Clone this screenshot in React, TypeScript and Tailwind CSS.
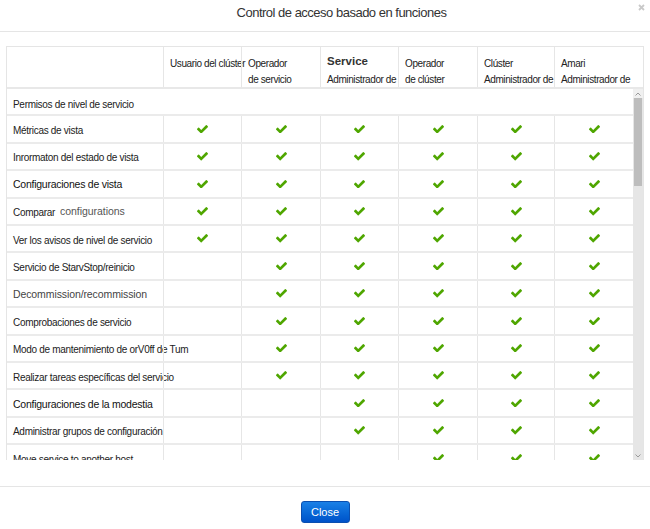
import React from 'react';

const SANS = "font-['Liberation_Sans',Arial,sans-serif]";

// widths of the six role columns (each includes its 1px left border)
const colW = ['w-[78px]', 'w-[79px]', 'w-[78px]', 'w-[79px]', 'w-[77px]', 'w-[79px]'];

type Row = { label: React.ReactNode; from: number; cls?: string };

const rows: Row[] = [
  { label: 'Métricas de vista', from: 0 },
  { label: 'Inrormaton del estado de vista', from: 0 },
  { label: 'Configuraciones de vista', from: 0, cls: 'text-[10.5px] tracking-[-0.25px] text-[#111]' },
  {
    label: (
      <>
        Comparar
        <span className="ml-[5px] text-[10.5px] tracking-[-0.05px] text-[#555] relative -top-[1px]">configurations</span>
      </>
    ),
    from: 0,
  },
  { label: 'Ver los avisos de nivel de servicio', from: 0 },
  { label: 'Servicio de StarvStop/reinicio', from: 1 },
  { label: 'Decommission/recommission', from: 1, cls: 'text-[10.5px] tracking-[-0.1px] text-[#444]' },
  { label: 'Comprobaciones de servicio', from: 1 },
  { label: 'Modo de mantenimiento de orV0ff de Tum', from: 1 },
  { label: 'Realizar tareas específicas del servicio', from: 1 },
  { label: 'Configuraciones de la modestia', from: 2, cls: 'text-[10.5px] tracking-[-0.25px] text-[#111]' },
  { label: 'Administrar grupos de configuración', from: 2 },
  { label: 'Move service to another host', from: 3 },
];

function Check() {
  return (
    <svg width="11" height="8.5" viewBox="121 334 1550 1188" preserveAspectRatio="none">
      <path
        fill="#4fa600"
        d="M1671 566q0 40-28 68l-724 724-136 136q-28 28-68 28t-68-28l-136-136-362-362q-28-28-28-68t28-68l136-136q28-28 68-28t68 28l294 295 656-657q28-28 68-28t68 28l136 136q28 28 28 68z"
      />
    </svg>
  );
}

function HeaderCell({ w, top, bottom, bold }: { w: string; top?: string; bottom?: string; bold?: boolean }) {
  return (
    <div className={`${w} shrink-0 border-l border-[#e6e6e6] pl-[6px] pt-[9px] leading-[15.5px] text-[10px] tracking-[-0.4px] text-[#222] whitespace-nowrap`}>
      {bold ? (
        <div className="font-bold text-[11.5px] tracking-[0px] text-[#333] -mt-[2px] mb-[2px]">{top}</div>
      ) : (
        <div>{top}</div>
      )}
      {bottom && <div>{bottom}</div>}
    </div>
  );
}

export default function App() {
  return (
    <div className={`w-[650px] h-[529px] bg-white relative ${SANS}`}>
      <div className="h-[32px] border-b border-[#e5e5e5] flex items-center justify-center pl-[33px] pb-[5px]">
        <h3 className="text-[13px] tracking-[-0.5px] text-[#333]">Control de acceso basado en funciones</h3>
      </div>
      <svg className="absolute left-[638px] top-[4px]" width="7" height="7" viewBox="0 0 7 7">
        <path d="M1 1L6 6M6 1L1 6" stroke="#c9c9c9" strokeWidth="1.8" />
      </svg>

      <div className="mt-[14px] ml-[6px] w-[638px] border-x border-t border-[#e5e5e5]">
        {/* column headings */}
        <div className="flex h-[42px] border-b-2 border-[#e8e8e8]">
          <div className="w-[156px] shrink-0" />
          <HeaderCell w="w-[78px]" top="Usuario del clúster" />
          <HeaderCell w="w-[79px]" top="Operador" bottom="de servicio" />
          <HeaderCell w="w-[78px]" top="Service" bottom="Administrador de" bold />
          <HeaderCell w="w-[79px]" top="Operador" bottom="de clúster" />
          <HeaderCell w="w-[77px]" top="Clúster" bottom="Administrador de" />
          <HeaderCell w="w-[89px]" top="Amari" bottom="Administrador de" />
        </div>

        {/* body with scrollbar */}
        <div className="flex h-[371px]">
          <div className="w-[626px] overflow-hidden">
            <div className="h-[27.4px] border-b-2 border-[#ebebeb] flex items-center pl-[6px] pt-[5px] text-[10px] tracking-[-0.3px] text-[#222]">
              Permisos de nivel de servicio
            </div>
            {rows.map((r, i) => (
              <div key={i} className="flex h-[27.4px] border-b-2 border-[#ebebeb]">
                <div
                  className={`w-[156px] shrink-0 flex items-center pl-[6px] pt-[3px] whitespace-nowrap ${
                    r.cls ?? 'text-[10px] tracking-[-0.3px] text-[#222]'
                  }`}
                >
                  {r.label}
                </div>
                {colW.map((w, c) => (
                  <div key={c} className={`${w} shrink-0 border-l border-[#e6e6e6] flex items-center justify-center`}>
                    {c >= r.from && <Check />}
                  </div>
                ))}
              </div>
            ))}
          </div>
          <div className="w-[10px] bg-[#e6e6e6] flex flex-col items-center">
            <div className="h-[9px] w-full bg-[#f0f0f0] flex items-center justify-center">
              <svg width="6" height="4" viewBox="0 0 6 4">
                <path d="M0.5 3.5L3 1L5.5 3.5" fill="none" stroke="#9a9a9a" strokeWidth="1" />
              </svg>
            </div>
            <div className="h-[88px] w-[8px] bg-[#bdbdbd]" />
            <div className="flex-1" />
            <div className="h-[9px] w-full flex items-center justify-center">
              <svg width="6" height="4" viewBox="0 0 6 4">
                <path d="M0.5 0.5L3 3L5.5 0.5" fill="none" stroke="#9a9a9a" strokeWidth="1" />
              </svg>
            </div>
          </div>
        </div>
      </div>

      <div className="mt-[26px] border-t border-[#e5e5e5] pt-[14px] flex justify-center">
        <button className="h-[22px] w-[49px] rounded-[3px] border border-[#0a4fb0] bg-gradient-to-b from-[#1a80e6] to-[#0052c9] text-white text-[11px]">
          Close
        </button>
      </div>
    </div>
  );
}
